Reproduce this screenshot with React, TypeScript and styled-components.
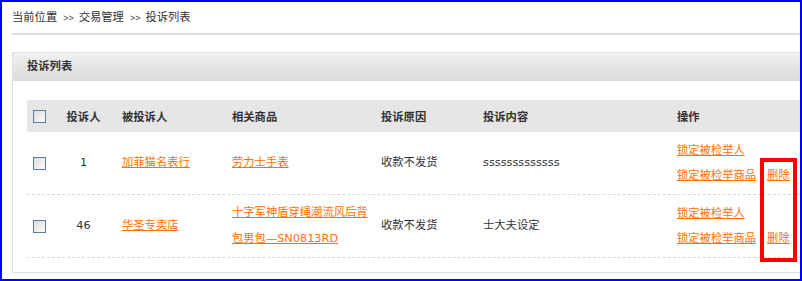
import React from 'react';
import styled, { createGlobalStyle } from 'styled-components';

const GlobalStyle = createGlobalStyle`
  html, body {
    margin: 0;
    padding: 0;
    background: #fff;
  }
  body {
    font-family: "DejaVu Sans", "Noto Sans CJK SC", sans-serif;
    font-size: 11.3px;
    color: #333;
  }
`;

interface Complaint {
  id: number;
  count: number;
  shop: string;
  product: string;
  reason: string;
  content: string;
}

const rows: Complaint[] = [
  { id: 1, count: 1, shop: '加菲猫名表行', product: '劳力士手表', reason: '收款不发货', content: 'sssssssssssss' },
  { id: 2, count: 46, shop: '华圣专卖店', product: '十字军神盾穿绳潮流风后背包男包—SN0813RD', reason: '收款不发货', content: '士大夫设定' },
];

const crumbs = ['当前位置', '交易管理', '投诉列表'];

const App: React.FC = () => {
  return (
    <>
      <GlobalStyle />
      <Frame>
        <Content>
          <Breadcrumb>
            {crumbs.map((c, i) => (
              <React.Fragment key={c}>
                {i > 0 && <Sep>&gt;&gt;</Sep>}
                <span>{c}</span>
              </React.Fragment>
            ))}
          </Breadcrumb>

          <Panel>
            <PanelHeader>投诉列表</PanelHeader>
            <PanelBody>
              <HeadRow>
                <CheckCell><CheckBox /></CheckCell>
                <Cell $center>投诉人</Cell>
                <Cell>被投诉人</Cell>
                <Cell>相关商品</Cell>
                <Cell>投诉原因</Cell>
                <Cell>投诉内容</Cell>
                <Cell>操作</Cell>
              </HeadRow>

              {rows.map((row) => (
                <BodyRow key={row.id}>
                  <CheckCell><CheckBox /></CheckCell>
                  <Cell $center>{row.count}</Cell>
                  <Cell><Link href="#">{row.shop}</Link></Cell>
                  <Cell><Link href="#">{row.product}</Link></Cell>
                  <Cell>{row.reason}</Cell>
                  <Cell>{row.content}</Cell>
                  <OpsCell>
                    <OpsList>
                      <Link href="#">锁定被检举人</Link>
                      <Link href="#">锁定被检举商品</Link>
                    </OpsList>
                    <DeleteLink href="#">删除</DeleteLink>
                  </OpsCell>
                </BodyRow>
              ))}
            </PanelBody>
          </Panel>
        </Content>

        <Highlight />
      </Frame>
    </>
  );
};

const Frame = styled.div`
  position: relative;
  width: 802px;
  height: 281px;
  box-sizing: border-box;
  border: 2px solid #0000ff;
  overflow: hidden;
  background: #fff;
`;

const Content = styled.div`
  width: 880px;
`;

const Breadcrumb = styled.div`
  margin-left: 10px;
  height: 31px;
  line-height: 31px;
  border-bottom: 2px solid #dcdcdc;
  color: #333;
`;

const Sep = styled.span`
  margin: 0 5px 0 6px;
  font-family: "Liberation Sans", sans-serif;
  font-size: 9px;
  color: #444;
`;

const Panel = styled.div`
  margin: 17px 0 0 10px;
  border: 1px solid #e0e0e0;
  background: #fff;
`;

const PanelHeader = styled.div`
  height: 28px;
  line-height: 28px;
  padding-left: 14px;
  font-weight: bold;
  color: #333;
  background: linear-gradient(to bottom, #f1f1f1, #dadada);
`;

const PanelBody = styled.div`
  padding: 19px 0 14px 14px;
`;

const Grid = styled.div`
  display: grid;
  grid-template-columns: 28px 57px 110px 149px 102px 194px 1fr;
  align-items: center;
`;

const HeadRow = styled(Grid)`
  height: 32px;
  background: #e6e6e6;
  font-weight: bold;
  color: #333;
`;

const BodyRow = styled(Grid)`
  min-height: 62px;
  border-bottom: 1px dashed #d9d9d9;
  line-height: 26px;
`;

const Cell = styled.div<{ $center?: boolean }>`
  padding-left: ${(p) => (p.$center ? '0' : '10px')};
  text-align: ${(p) => (p.$center ? 'center' : 'left')};
`;

const CheckCell = styled.div`
  padding-left: 6px;
  display: flex;
  align-items: center;
`;

const CheckBox = styled.span`
  display: block;
  width: 11px;
  height: 11px;
  border: 1px solid #5a7ca6;
  background: linear-gradient(135deg, #dcdcdc, #fbfbfb);
`;

const Link = styled.a`
  color: #ff7000;
  text-decoration: underline;
`;

const OpsCell = styled.div`
  padding-left: 10px;
  display: flex;
  align-items: flex-end;
  line-height: 25px;
`;

const OpsList = styled.div`
  display: flex;
  flex-direction: column;
  align-items: flex-start;
`;

const DeleteLink = styled(Link)`
  margin-left: 11px;
`;

const Highlight = styled.div`
  position: absolute;
  left: 758px;
  top: 156px;
  width: 37px;
  height: 104px;
  box-sizing: border-box;
  border: 4px solid #ff0000;
  pointer-events: none;
`;

export default App;
